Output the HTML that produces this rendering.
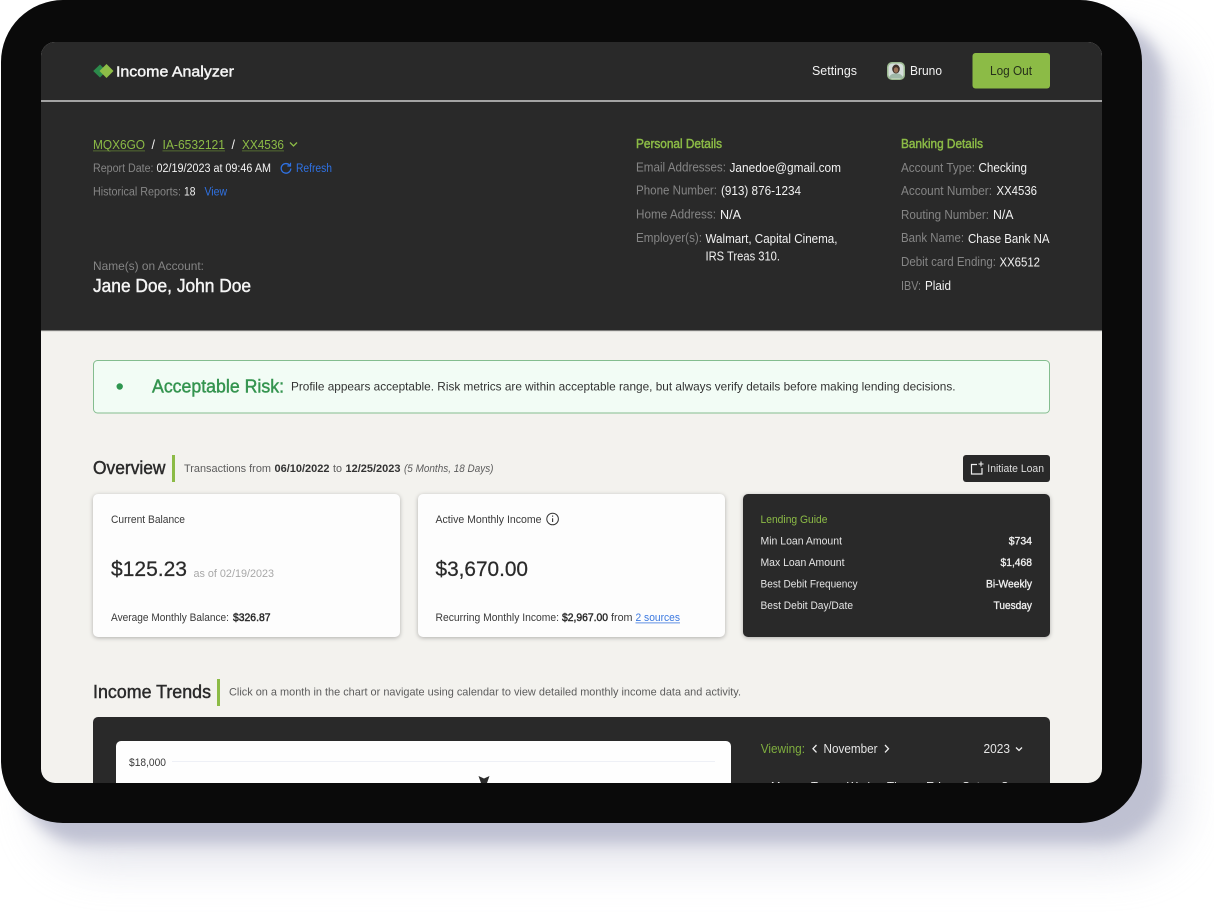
<!DOCTYPE html>
<html lang="en"><head><meta charset="utf-8"><title>Income Analyzer</title>
<style>
html,body{margin:0;padding:0;background:#fff;width:1214px;height:916px;overflow:hidden}
#sh1,#sh2,#fr{position:absolute;border-radius:62px}
#sh2{left:40px;top:40px;width:1142px;height:823px;background:#c9cbda;filter:blur(22px);opacity:.55}
#sh1{left:22px;top:20px;width:1142px;height:823px;background:#bfc1d2;filter:blur(7px)}
#fr{left:1px;top:0;width:1141px;height:823px;background:#0a0a0a}
svg{position:absolute;left:0;top:0}
text{font-family:"Liberation Sans",Arial,sans-serif;font-size:11.5px}
.g{fill:#858585}.w{fill:#f2f2f2}.gr{fill:#8cbb46}.b{fill:#2f72e4}.d{fill:#3a3a3a}.k{fill:#2a2a2a}
.m{stroke:currentColor;stroke-width:.45}
</style></head><body>
<div id="sh2"></div><div id="sh1"></div><div id="fr"></div>
<svg width="1214" height="916" viewBox="0 0 1214 916" xmlns="http://www.w3.org/2000/svg" style="filter:blur(.3px)">
<defs><clipPath id="s"><rect x="41" y="42" width="1061" height="741" rx="14"/></clipPath></defs>
<g clip-path="url(#s)">
<rect x="41" y="42" width="1061" height="741" fill="#f3f2ee"/>
<rect x="41" y="42" width="1061" height="289" fill="#292929"/>
<rect x="41" y="330.500" width="1061" height="1" fill="#cfcfcb"/>
<rect x="41" y="100" width="1061" height="2" fill="#a3a3a3"/>

<path d="M100 64.500l6.500 6.500-6.500 6.500-6.800-6.500z" fill="#2c8a4b"/>
<path d="M106.500 64l7 7-7 7-7-7z" fill="#8dbd47"/>
<text x="116" y="76.500" style="font-size:15px;color:#f5f5f5" textLength="118" lengthAdjust="spacingAndGlyphs" fill="#f5f5f5" class="m">Income Analyzer</text>

<text x="812" y="75" style="font-size:12.500px" textLength="45" lengthAdjust="spacingAndGlyphs" class="w">Settings</text>
<rect x="887" y="62" width="18" height="18" rx="5" fill="#9dbb92"/>
<rect x="888.500" y="63.500" width="15" height="15" rx="4" fill="#d5dedb"/>
<ellipse cx="896" cy="69" rx="3.800" ry="4.500" fill="#40312a"/>
<ellipse cx="896" cy="70" rx="2.200" ry="2.800" fill="#9a7257"/>
<path d="M889 78c1-4 4-4.500 7-4.500s6 .5 7 4.500z" fill="#9fb8a8"/>
<text x="910" y="75" style="font-size:12.500px" textLength="32" lengthAdjust="spacingAndGlyphs" class="w">Bruno</text>
<rect x="972.500" y="53" width="77.500" height="35.500" rx="3" fill="#8cbb46"/>
<text x="990" y="75" style="font-size:12.500px" textLength="42" lengthAdjust="spacingAndGlyphs" fill="#26301a">Log Out</text>

<text x="93" y="149" style="font-size:12.500px" textLength="52" lengthAdjust="spacingAndGlyphs" class="gr">MQX6GO</text>
<rect x="93" y="150.500" width="52" height=".8" fill="#5f7d33"/>
<text x="151.500" y="149" style="font-size:12.500px" class="w">/</text>
<text x="162.500" y="149" style="font-size:12.500px" textLength="62.500" lengthAdjust="spacingAndGlyphs" class="gr">IA-6532121</text>
<rect x="162.500" y="150.500" width="62.500" height=".8" fill="#5f7d33"/>
<text x="231.500" y="149" style="font-size:12.500px" class="w">/</text>
<text x="242" y="149" style="font-size:12.500px" textLength="42" lengthAdjust="spacingAndGlyphs" class="gr">XX4536</text>
<rect x="242" y="150.500" width="42" height=".8" fill="#5f7d33"/>
<path d="M290 142.500l3.500 3.500 3.500-3.500" fill="none" stroke="#8cbb46" stroke-width="1.300"/>

<text x="93" y="172" textLength="60.500" lengthAdjust="spacingAndGlyphs" class="g">Report Date:</text>
<text x="156.500" y="172" textLength="114.500" lengthAdjust="spacingAndGlyphs" class="w">02/19/2023 at 09:46 AM</text>
<path d="M289.700 165.300a4.800 4.800 0 1 0 1.100 3.200" fill="none" stroke="#2f72e4" stroke-width="1.300"/>
<path d="M290.500 162.800v3.200h-3.200" fill="none" stroke="#2f72e4" stroke-width="1.200"/>
<text x="296" y="172" textLength="36" lengthAdjust="spacingAndGlyphs" class="b">Refresh</text>
<text x="93" y="195.500" textLength="88" lengthAdjust="spacingAndGlyphs" class="g">Historical Reports:</text>
<text x="184" y="195.500" textLength="11.500" lengthAdjust="spacingAndGlyphs" class="w">18</text>
<text x="204.500" y="195.500" textLength="22.500" lengthAdjust="spacingAndGlyphs" class="b">View</text>

<text x="93" y="270" style="font-size:12px" textLength="111" lengthAdjust="spacingAndGlyphs" class="g">Name(s) on Account:</text>
<text x="93" y="292" style="font-size:18px;color:#f5f5f5" textLength="158" lengthAdjust="spacingAndGlyphs" fill="#f5f5f5" class="m">Jane Doe, John Doe</text>

<g style="color:#8cbb46">
<text x="636" y="148" style="font-size:12.500px" textLength="86" lengthAdjust="spacingAndGlyphs" class="gr m">Personal Details</text>
<text x="901" y="148" style="font-size:12.500px" textLength="82" lengthAdjust="spacingAndGlyphs" class="gr m">Banking Details</text>
</g>
<text x="636" y="171.500" style="font-size:12.500px" textLength="90" lengthAdjust="spacingAndGlyphs" class="g">Email Addresses:</text>
<text x="729.500" y="172" style="font-size:12.500px" textLength="111.500" lengthAdjust="spacingAndGlyphs" class="w">Janedoe@gmail.com</text>
<text x="636" y="194.500" style="font-size:12.500px" textLength="81" lengthAdjust="spacingAndGlyphs" class="g">Phone Number:</text>
<text x="721" y="195" style="font-size:12.500px" textLength="80" lengthAdjust="spacingAndGlyphs" class="w">(913) 876-1234</text>
<text x="636" y="218.500" style="font-size:12.500px" textLength="80" lengthAdjust="spacingAndGlyphs" class="g">Home Address:</text>
<text x="720" y="219" style="font-size:12.500px" textLength="21" lengthAdjust="spacingAndGlyphs" class="w">N/A</text>
<text x="636" y="242" style="font-size:12.500px" textLength="66" lengthAdjust="spacingAndGlyphs" class="g">Employer(s):</text>
<text x="705.500" y="243" style="font-size:12.500px" textLength="132" lengthAdjust="spacingAndGlyphs" class="w">Walmart, Capital Cinema,</text>
<text x="705.500" y="260.500" style="font-size:12.500px" textLength="74.500" lengthAdjust="spacingAndGlyphs" class="w">IRS Treas 310.</text>

<text x="901" y="172" style="font-size:12.500px" textLength="74" lengthAdjust="spacingAndGlyphs" class="g">Account Type:</text>
<text x="978.500" y="172" style="font-size:12.500px" textLength="48.500" lengthAdjust="spacingAndGlyphs" class="w">Checking</text>
<text x="901" y="195" style="font-size:12.500px" textLength="91" lengthAdjust="spacingAndGlyphs" class="g">Account Number:</text>
<text x="996.500" y="195" style="font-size:12.500px" textLength="40.500" lengthAdjust="spacingAndGlyphs" class="w">XX4536</text>
<text x="901" y="219" style="font-size:12.500px" textLength="88" lengthAdjust="spacingAndGlyphs" class="g">Routing Number:</text>
<text x="993" y="219" style="font-size:12.500px" textLength="20.500" lengthAdjust="spacingAndGlyphs" class="w">N/A</text>
<text x="901" y="242" style="font-size:12.500px" textLength="63" lengthAdjust="spacingAndGlyphs" class="g">Bank Name:</text>
<text x="968" y="243" style="font-size:12.500px" textLength="81.500" lengthAdjust="spacingAndGlyphs" class="w">Chase Bank NA</text>
<text x="901" y="266" style="font-size:12.500px" textLength="95" lengthAdjust="spacingAndGlyphs" class="g">Debit card Ending:</text>
<text x="999.500" y="266.500" style="font-size:12.500px" textLength="40.500" lengthAdjust="spacingAndGlyphs" class="w">XX6512</text>
<text x="901" y="290" style="font-size:12.500px" textLength="20" lengthAdjust="spacingAndGlyphs" class="g">IBV:</text>
<text x="925" y="290" style="font-size:12.500px" textLength="26" lengthAdjust="spacingAndGlyphs" class="w">Plaid</text>

<rect x="93.500" y="360.500" width="956" height="52.500" rx="4" fill="#f2fcf5" stroke="#84bd8f"/>
<circle cx="119.700" cy="386.500" r="3.200" fill="#2f9650"/>
<text x="152" y="392.500" style="font-size:18.500px;color:#34944f" textLength="132" lengthAdjust="spacingAndGlyphs" fill="#34944f" class="m">Acceptable Risk:</text>
<text x="291" y="390.500" style="font-size:12px" textLength="664.500" lengthAdjust="spacingAndGlyphs" fill="#333">Profile appears acceptable. Risk metrics are within acceptable range, but always verify details before making lending decisions.</text>

<text x="93" y="474" style="font-size:18px;color:#2a2a2a" textLength="72.500" lengthAdjust="spacingAndGlyphs" class="k m">Overview</text>
<rect x="172" y="455" width="3" height="27" fill="#8cbb46"/>
<text x="184" y="472" style="font-size:11px" textLength="87" lengthAdjust="spacingAndGlyphs" fill="#5c5c5c">Transactions from</text>
<text x="274.500" y="472" style="font-size:11px;font-weight:bold" textLength="55" lengthAdjust="spacingAndGlyphs" fill="#333">06/10/2022</text>
<text x="333" y="472" style="font-size:11px" textLength="9" lengthAdjust="spacingAndGlyphs" fill="#5c5c5c">to</text>
<text x="345.500" y="472" style="font-size:11px;font-weight:bold" textLength="55" lengthAdjust="spacingAndGlyphs" fill="#333">12/25/2023</text>
<text x="404" y="472" style="font-size:11px;font-style:italic" textLength="89.500" lengthAdjust="spacingAndGlyphs" fill="#5c5c5c">(5 Months, 18 Days)</text>

<rect x="963" y="455" width="87" height="27" rx="3" fill="#292929"/>
<path d="M977 464.500h-5.500v9.500h10.500v-6" fill="none" stroke="#eee" stroke-width="1.200"/>
<path d="M981 461.500v5M978.500 464h5" fill="none" stroke="#eee" stroke-width="1.100"/>
<text x="987.300" y="472" style="font-size:11px" textLength="56.700" lengthAdjust="spacingAndGlyphs" fill="#ddd">Initiate Loan</text>

<g style="filter:drop-shadow(0 1.500px 2px rgba(0,0,0,.28))">
<rect x="93" y="494" width="307" height="143" rx="5" fill="#fdfdfd"/>
<rect x="418" y="494" width="307" height="143" rx="5" fill="#fdfdfd"/>
<rect x="743" y="494" width="307" height="143" rx="5" fill="#292929"/>
</g>
<text x="111" y="523" style="font-size:11px" textLength="74" lengthAdjust="spacingAndGlyphs" class="d">Current Balance</text>
<text x="111" y="576" style="font-size:21.500px;color:#2a2a2a;stroke-width:.25" textLength="76" lengthAdjust="spacingAndGlyphs" class="k m">$125.23</text>
<text x="193.500" y="577" style="font-size:11px" textLength="80.500" lengthAdjust="spacingAndGlyphs" fill="#a8a8a8">as of 02/19/2023</text>
<text x="111" y="621" style="font-size:11px" textLength="118" lengthAdjust="spacingAndGlyphs" class="d">Average Monthly Balance:</text>
<text x="233" y="621" style="font-size:11px;color:#2a2a2a" textLength="37.500" lengthAdjust="spacingAndGlyphs" class="k m">$326.87</text>

<text x="435.500" y="523" style="font-size:11px" textLength="106" lengthAdjust="spacingAndGlyphs" class="d">Active Monthly Income</text>
<circle cx="552.600" cy="519" r="5.800" fill="none" stroke="#333" stroke-width="1"/>
<path d="M552.600 518.300v3.700M552.600 515.500v1.300" stroke="#333" stroke-width="1.100"/>
<text x="435.500" y="576" style="font-size:21.500px;color:#2a2a2a;stroke-width:.25" textLength="92.500" lengthAdjust="spacingAndGlyphs" class="k m">$3,670.00</text>
<text x="435.500" y="621" style="font-size:11px" textLength="123.500" lengthAdjust="spacingAndGlyphs" class="d">Recurring Monthly Income:</text>
<text x="562" y="621" style="font-size:11px;color:#2a2a2a" textLength="46" lengthAdjust="spacingAndGlyphs" class="k m">$2,967.00</text>
<text x="611" y="621" style="font-size:11px" textLength="21.500" lengthAdjust="spacingAndGlyphs" class="d">from</text>
<text x="635.500" y="621" style="font-size:11px" textLength="44.500" lengthAdjust="spacingAndGlyphs" fill="#3a78e0">2 sources</text>
<rect x="635.500" y="622.500" width="44.500" height=".8" fill="#3a78e0"/>

<text x="760.500" y="523" style="font-size:11px" textLength="67" lengthAdjust="spacingAndGlyphs" class="gr">Lending Guide</text>
<text x="760.500" y="544.500" style="font-size:11px" textLength="81.500" lengthAdjust="spacingAndGlyphs" fill="#e4e4e4">Min Loan Amount</text>
<text x="1008.700" y="544.500" style="font-size:11px;color:#f2f2f2;stroke-width:.3" textLength="23.300" lengthAdjust="spacingAndGlyphs" class="w m">$734</text>
<text x="760.500" y="566" style="font-size:11px" textLength="84" lengthAdjust="spacingAndGlyphs" fill="#e4e4e4">Max Loan Amount</text>
<text x="1000.500" y="566" style="font-size:11px;color:#f2f2f2;stroke-width:.3" textLength="31.500" lengthAdjust="spacingAndGlyphs" class="w m">$1,468</text>
<text x="760.500" y="587.500" style="font-size:11px" textLength="97" lengthAdjust="spacingAndGlyphs" fill="#e4e4e4">Best Debit Frequency</text>
<text x="986" y="587.500" style="font-size:11px;color:#f2f2f2;stroke-width:.3" textLength="46" lengthAdjust="spacingAndGlyphs" class="w m">Bi-Weekly</text>
<text x="760.500" y="609" style="font-size:11px" textLength="92.500" lengthAdjust="spacingAndGlyphs" fill="#e4e4e4">Best Debit Day/Date</text>
<text x="993.500" y="609" style="font-size:11px;color:#f2f2f2;stroke-width:.3" textLength="38.500" lengthAdjust="spacingAndGlyphs" class="w m">Tuesday</text>

<text x="93" y="698" style="font-size:18px;color:#2a2a2a" textLength="118" lengthAdjust="spacingAndGlyphs" class="k m">Income Trends</text>
<rect x="217" y="679" width="3" height="27" fill="#8cbb46"/>
<text x="229" y="695.500" style="font-size:11px" textLength="512" lengthAdjust="spacingAndGlyphs" fill="#5c5c5c">Click on a month in the chart or navigate using calendar to view detailed monthly income data and activity.</text>

<rect x="93" y="717" width="957" height="100" rx="5" fill="#292929"/>
<rect x="116" y="741" width="615" height="70" rx="5" fill="#fefefe"/>
<text x="129" y="766" style="font-size:11px" textLength="37" lengthAdjust="spacingAndGlyphs" class="d">$18,000</text>
<rect x="172" y="761" width="543" height="1" fill="#eef0f6"/>
<path d="M478.500 776l5.500 2.500 5.500-2.500-2.500 7h-6z" fill="#2a2a2a"/>

<text x="760.700" y="753" style="font-size:12.500px" textLength="44.300" lengthAdjust="spacingAndGlyphs" fill="#7fae3f">Viewing:</text>
<path d="M816.500 745l-3.500 3.700 3.500 3.700" fill="none" stroke="#eee" stroke-width="1.300"/>
<text x="823.500" y="753" style="font-size:12.500px" textLength="54" lengthAdjust="spacingAndGlyphs" fill="#e4e4e4">November</text>
<path d="M885 745l3.500 3.700-3.500 3.700" fill="none" stroke="#eee" stroke-width="1.300"/>
<text x="983.500" y="753" style="font-size:12.500px" textLength="26.500" lengthAdjust="spacingAndGlyphs" fill="#e4e4e4">2023</text>
<path d="M1016 747.500l3 3 3-3" fill="none" stroke="#eee" stroke-width="1.300"/>

<text x="771" y="790.500" style="font-size:12px" textLength="22" lengthAdjust="spacingAndGlyphs" fill="#eee">Mon</text>
<text x="811" y="790.500" style="font-size:12px" textLength="19" lengthAdjust="spacingAndGlyphs" fill="#eee">Tue</text>
<text x="847" y="790.500" style="font-size:12px" textLength="23" lengthAdjust="spacingAndGlyphs" fill="#eee">Wed</text>
<text x="887" y="790.500" style="font-size:12px" textLength="20" lengthAdjust="spacingAndGlyphs" fill="#eee">Thu</text>
<text x="926" y="790.500" style="font-size:12px" textLength="15" lengthAdjust="spacingAndGlyphs" fill="#eee">Fri</text>
<text x="962" y="790.500" style="font-size:12px" textLength="18" lengthAdjust="spacingAndGlyphs" fill="#eee">Sat</text>
<text x="1001" y="790.500" style="font-size:12px" textLength="20" lengthAdjust="spacingAndGlyphs" fill="#eee">Sun</text>
</g>
</svg>
</body></html>
